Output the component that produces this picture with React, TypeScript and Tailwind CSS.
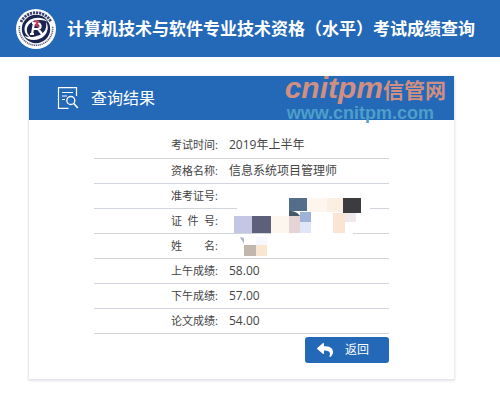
import { FaReply } from "react-icons/fa";

interface ResultRow {
  label: string;
  value: string;
}

const rows: ResultRow[] = [
  { label: "考试时间", value: "2019年上半年" },
  { label: "资格名称", value: "信息系统项目管理师" },
  { label: "准考证号", value: "" },
  { label: "证 件 号", value: "" },
  { label: "姓 名", value: "" },
  { label: "上午成绩", value: "58.00" },
  { label: "下午成绩", value: "57.00" },
  { label: "论文成绩", value: "54.00" },
];

function Logo() {
  return (
    <svg viewBox="0 0 40 40" className="size-10 shrink-0" aria-hidden="true">
      <circle cx="20" cy="20" r="20" fill="#fff" />
      <path d="M5 13A16.7 16.7 0 0 1 35 13" fill="none" stroke="#3a4070" strokeWidth="2.8" strokeDasharray="2.2 0.9" />
      <path d="M3.5 17A16.7 16.7 0 1 0 36.5 17" fill="none" stroke="#5b6085" strokeWidth="1.6" strokeDasharray="1.2 0.7" />
      <circle cx="20" cy="20" r="14.2" fill="#1b2350" />
      <path d="M32 13C26 6 12 8 9 17c-2 6 2 11 7 12-8-5-6-14 2-17 6-2 11-1 14 1z" fill="#fff" />
      <path d="M8 27c5 6 16 5 21-1 4-5 3-10 1-13 1 6-1 10-6 13-5 2-11 3-16 1z" fill="#fff" />
      <path
        d="M16 14h5c4 0 5 5 1 6l4 5M18 14l-2 11M14 25h4M17 20h5"
        fill="none"
        stroke="#fff"
        strokeWidth="2.2"
      />
      <path d="M18 12l4 1-2 3 3 2" fill="none" stroke="#d43a56" strokeWidth="2" />
    </svg>
  );
}

function ResultIcon() {
  return (
    <svg viewBox="0 0 22 22" className="size-[22px]" fill="none" stroke="#fff" aria-hidden="true">
      <path d="M19.5 9V.6h-18v20.800h10" strokeWidth="1.2" />
      <path d="M5 5.5h11M5 9h5M5 12.5h3" strokeWidth="1.2" />
      <circle cx="13.8" cy="13.5" r="4" strokeWidth="1.3" />
      <path d="M16.8 16.5l4 4.5" strokeWidth="1.6" />
    </svg>
  );
}

// Pixelated blocks that hide the personal details
function Mosaic() {
  return (
    <svg viewBox="0 0 141 62" className="absolute top-16 left-[135px] h-[62px] w-[141px]" aria-hidden="true">
      <path d="M8 0h133v20h-17v18H42V19H8z" fill="#fff" />
      <path d="M42 19h18v17H42zM78 1h20v14H78z" fill="#fdf6ee" />
      <path d="M98 1h16v14H98z" fill="#fbefe2" />
      <path d="M60 1h18v13H60z" fill="#536d8b" />
      <path d="M114 1h18v15h-18z" fill="#3c3b40" />
      <path d="M60 14c6 0 9 2 11 5H60z" fill="#46566b" />
      <path d="M71 15h11v10H71z" fill="#9fb3d9" />
      <path d="M60 19h11v17H60z" fill="#e6d3d6" />
      <path d="M71 25h11v11H71z" fill="#dfe6f7" />
      <path d="M5 19h18v17H5z" fill="#c3c7e4" />
      <path d="M23 19h19v17H23z" fill="#5d6078" />
      <path d="M104 16h12v20h-12z" fill="#fae4d3" />
      <path d="M116 16h11v9h-11z" fill="#f0e8ea" />
      <path d="M11 40l4 1v6z" fill="#a9b4c9" />
      <path d="M27 40h11v8H27z" fill="#f6f8fe" />
      <path d="M15 48h12v11H15z" fill="#c2b7ac" />
      <path d="M27 48h11v11H27z" fill="#f8e6d0" />
    </svg>
  );
}

export default function App() {
  return (
    <div className="min-h-screen bg-white font-['Open_Sans','Noto_Sans_CJK_SC',sans-serif] text-[#444]">
      <header className="flex h-[57px] items-center gap-[11px] bg-[#2468b8] px-4">
        <Logo />
        <h1 className="text-[17px] font-bold whitespace-nowrap text-white">
          计算机技术与软件专业技术资格（水平）考试成绩查询
        </h1>
      </header>

      <main className="mt-[19px] mr-[46px] ml-[29px] bg-white pb-4 shadow-[0_1px_2px_1px_#e2e4e8]">
        <div className="relative flex h-11 items-center gap-3 bg-[#2468b8] px-7">
          <ResultIcon />
          <h2 className="text-base text-white">查询结果</h2>
          {/* Watermark */}
          <div className="absolute top-0 right-2 text-right font-['Liberation_Sans','Noto_Sans_CJK_SC',sans-serif] font-bold whitespace-nowrap">
            <div className="flex items-baseline text-[#d08f80]">
              <span className="text-[30px] leading-6 italic">cnitpm</span>
              <span className="text-[21px] leading-6">信管网</span>
            </div>
            <div className="pr-3 text-[18px] leading-5 text-[#4c9fc8]">www.cnitpm.com</div>
          </div>
        </div>

        <div className="mx-[65px] mt-[13px]">
          <div className="relative">
            <table className="w-full border-collapse">
              <tbody>
                {rows.map((row) => (
                  <tr key={row.label} className="h-[25px] border-b border-gray-300">
                    <th scope="row" className="w-[124px] p-0 text-[11px] leading-4 font-normal">
                      <div className="flex justify-end">
                        <span className="w-11 [text-align-last:justify]">{row.label}</span>:
                      </div>
                    </th>
                    <td className="p-0 pl-[11px] text-xs">{row.value}</td>
                  </tr>
                ))}
              </tbody>
            </table>
            <Mosaic />
          </div>
          <div className="mt-[3px] flex justify-end">
            <button
              type="button"
              className="flex h-[26px] w-[84px] items-center gap-3 rounded-[3px] bg-[#2468b8] pl-3 text-xs text-white"
            >
              <FaReply className="size-4" />
              返回
            </button>
          </div>
        </div>
      </main>
    </div>
  );
}
